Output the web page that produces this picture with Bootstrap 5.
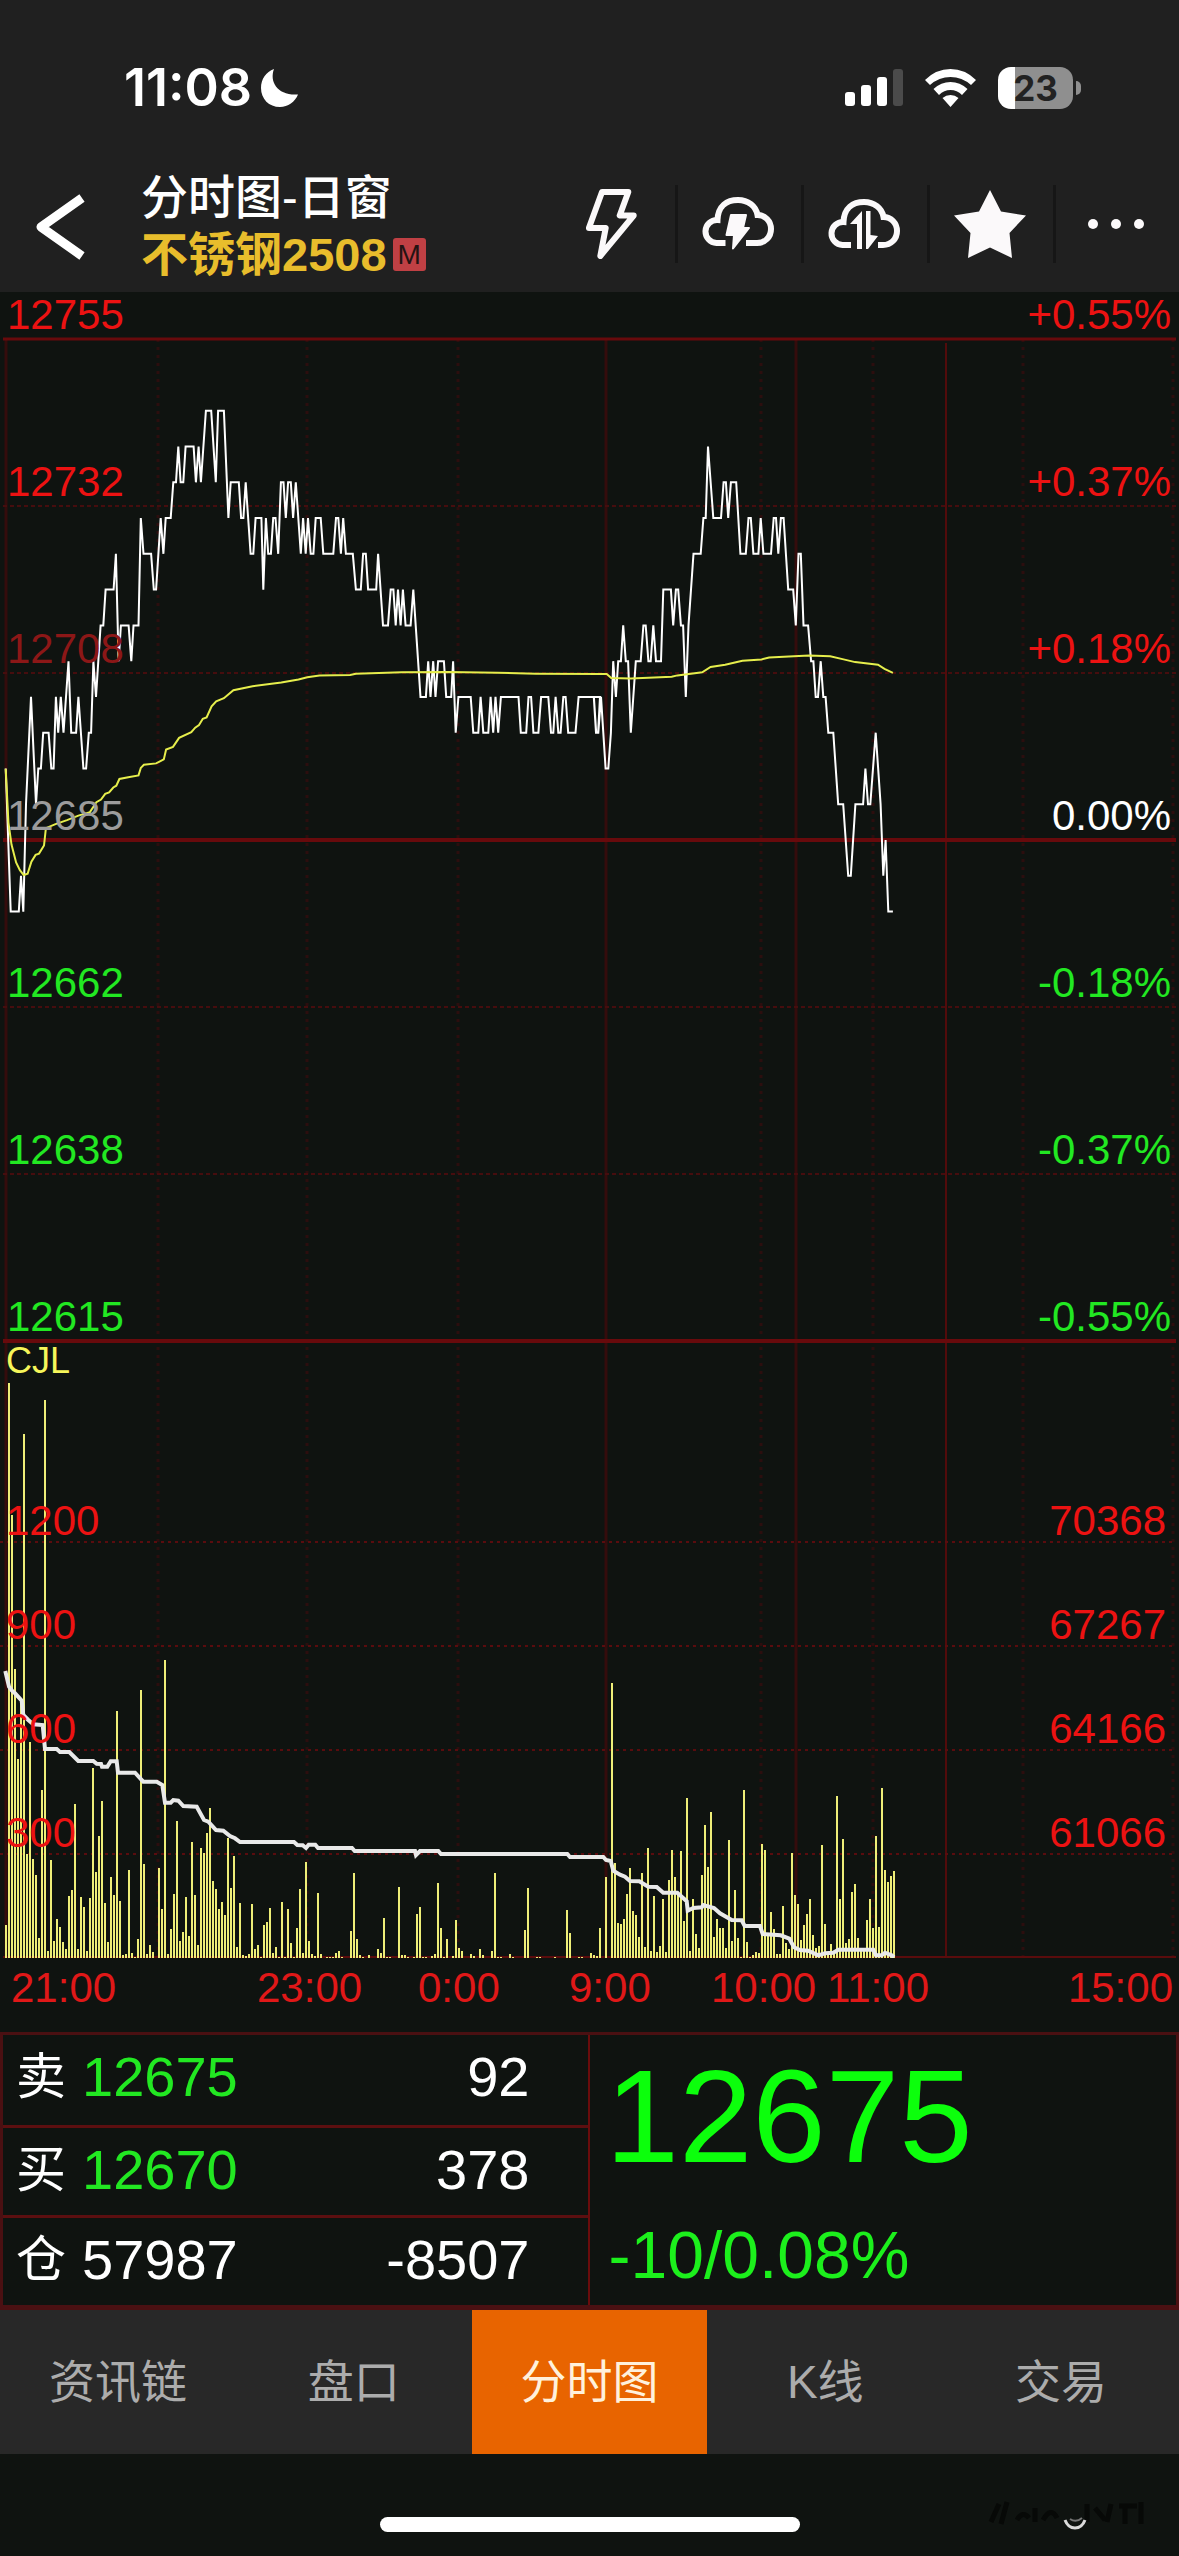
<!DOCTYPE html>
<html lang="zh-CN">
<head>
<meta charset="utf-8">
<meta name="viewport" content="width=device-width, initial-scale=1">
<title>不锈钢2508 分时图</title>
<link href="https://cdn.jsdelivr.net/npm/bootstrap@5.3.0/dist/css/bootstrap.min.css" rel="stylesheet">
<style>
  body { background: #0f1310; color: #fff; font-family: "Liberation Sans", "Noto Sans CJK SC", sans-serif; }
  .app-head { background: #202020; }
  .status-row { height: 156px; padding: 20px 98px 0 124px; font: 600 52px/56px Inter, sans-serif; }
  .status-icons { gap: 22px; }
  .batt { width: 83px; height: 42px; }
  .batt-body { width: 75px; height: 42px; border-radius: 13px; background: linear-gradient(90deg, #fff 17px, #8f8f8f 17px); color: #222; font: 700 35px/42px Inter, sans-serif; }
  .batt-tip { width: 5px; height: 14px; border-radius: 0 7px 7px 0; background: #8f8f8f; }
  .nav-row { height: 136px; }
  .btn-back { width: 141px; padding: 6px 0 0 36px; }
  .head-text { padding-top: 4px; }
  .head-title { font-size: 47px; line-height: 57px; font-weight: 500; margin: 0; }
  .head-code { font-size: 47px; line-height: 57px; font-weight: 700; color: #e8bd2c; gap: 6px; }
  .code-flag { width: 33px; height: 33px; background: #c04044; color: #241313; font-size: 28px; line-height: 33px; border-radius: 3px; font-weight: 400; }
  .tool-btn { width: 126px; height: 78px; border-left: 3px solid #161616; padding: 0 4px 0 0; }
  .tool-btn:first-child { border-left-color: transparent; }
  .tool-btn, .btn-back { background: none; border-top: 0; border-right: 0; border-bottom: 0; color: #fbf9fa; }
  .btn-back { border-left: 0; }
  .plot-svg { inset: 0; width: 100%; height: 100%; z-index: 0; }
  .axis-row { font-size: 42px; line-height: 42px; height: 167px; padding: 0 8px 3px 7px; z-index: 1; color: #ec1212; }
  .axis-first { height: 47px; }
  .vol-row { height: 104px; padding: 0 13px 0 6px; }
  .vol-first { height: 201px; }
  .vol-name { font-size: 36px; line-height: 36px; color: #f6f65a; padding-top: 2px; }
  .c-down { color: #22e822; }
  .c-dim { color: #8c1717; }
  .c-base { color: #9c9c9c; }
  .time-row { display: grid; grid-template-columns: 246fr 161fr 151fr 142fr 116fr 346fr; height: 74px; padding: 9px 6px 0 11px; font-size: 42px; line-height: 42px; color: #e01818; }
  .quote { border: 3px solid #4a1012; border-bottom-width: 5px; }
  .quote-l { width: 50%; border-right: 2px solid #6a0c0c; }
  .q-row { height: 90px; font-size: 56px; line-height: 84px; padding: 0 58px 0 13px; }
  .q-row + .q-row { border-top: 3px solid #5c0f10; }
  .q-name { font-size: 50px; width: 66px; }
  .q-big { font-size: 132px; line-height: 132px; color: #0cff0c; padding: 16px 0 0 16px; }
  .q-chg { font-size: 66px; line-height: 66px; color: #1cf01c; padding: 39px 0 0 19px; }
  .tabs { background: #282828; height: 144px; }
  .tab-link { font-size: 46px; color: #acacac; text-decoration: none; }
  .tab-link.active { background: #e86400; color: #fff1dc; }
  .foot { height: 102px; }
  .home-bar { width: 420px; height: 15px; border-radius: 8px; background: #fff; bottom: 24px; left: 50%; transform: translateX(-50%); }
  .smudge { right: 26px; bottom: 24px; }
</style>
</head>
<body>
<header class="app-head">
  <div class="status-row d-flex align-items-center justify-content-between">
    <div class="d-flex align-items-center gap-2">
      <span>11:08</span>
      <svg width="40" height="40" viewBox="0 0 40 40" fill="#fff" aria-hidden="true"><path d="M14 1C9 14 18 28 38 26.500C35 34 28 39 20 39C9 39 1 31 1 20C1 11 6 4 14 1Z"/></svg>
    </div>
    <div class="status-icons d-flex align-items-center">
      <svg width="58" height="38" viewBox="0 0 58 38" fill="#fff" aria-hidden="true"><rect x="0" y="23" width="10" height="14" rx="3"/><rect x="16" y="16" width="10" height="21" rx="3"/><rect x="32" y="8" width="10" height="29" rx="3"/><rect x="48" y="0" width="10" height="37" rx="3" fill="#4b4b4b"/></svg>
      <svg width="51" height="38" viewBox="0 0 51 38" fill="#fff" aria-hidden="true"><path d="M0 11Q11 0 25.500 0T51 11L46 16Q37 8 25.500 8T5 16ZM8.500 20Q16 13 25.500 13T42.500 20L37 26Q32 21 25.500 21T14 26ZM17.500 29Q21 26 25.500 26T33.500 29L25.500 38Z"/></svg>
      <div class="batt d-flex align-items-center justify-content-between">
        <div class="batt-body text-center">23</div><div class="batt-tip"></div>
      </div>
    </div>
  </div>
  <nav class="nav-row d-flex align-items-center justify-content-between">
    <div class="d-flex align-items-center">
      <button type="button" class="btn-back text-start" aria-label="返回"><svg width="50" height="66" viewBox="0 0 50 66" fill="none" stroke="#fff" stroke-width="9" stroke-linejoin="round" aria-hidden="true"><path d="M46 4L5 33L46 62"/></svg></button>
      <div class="head-text">
        <h1 class="head-title">分时图-日窗</h1>
        <div class="head-code d-flex align-items-center"><span>不锈钢2508</span><span class="code-flag text-center">M</span></div>
      </div>
    </div>
    <div class="d-flex">
      <button type="button" class="tool-btn d-flex align-items-center justify-content-center" aria-label="闪电下单"><svg width="52" height="70" viewBox="0 0 52 70" fill="none" stroke="currentColor" stroke-width="6" stroke-linejoin="round" aria-hidden="true"><path d="M16 3H42.300L33.700 26.500H47.700L14.300 67L19.700 39H2.900Z"/></svg></button>
      <button type="button" class="tool-btn d-flex align-items-center justify-content-center" aria-label="云条件单"><svg width="72" height="54" viewBox="0 0 72 54" aria-hidden="true"><path d="M23.500 46H14.500A11.500 11.500 0 0 1 15.500 23C16 9 25 3 36 3C46 3 54 9 55.500 18C63 18 69 24 69 32C69 40 63 46 55 46H44" fill="none" stroke="currentColor" stroke-width="6"/><path d="M29 18H44L41 31H47L31 51.500L32 38H24.500Z" fill="currentColor" stroke="currentColor" stroke-width="2" stroke-linejoin="round"/></svg></button>
      <button type="button" class="tool-btn d-flex align-items-center justify-content-center" aria-label="云止损"><svg width="72" height="50" viewBox="0 0 72 50" aria-hidden="true"><path d="M23 46H14.500A11.500 11.500 0 0 1 15.500 23C16 9 25 3 36 3C46 3 54 9 55.500 18C63 18 69 24 69 32C69 40 63 46 55 46H50" fill="none" stroke="currentColor" stroke-width="6"/><path d="M34 12V50H29V25H22ZM38 12H42.500V36L50 37L40 50H38Z" fill="currentColor"/></svg></button>
      <button type="button" class="tool-btn d-flex align-items-center justify-content-center" aria-label="自选"><svg width="72" height="68" viewBox="0 0 72 68" fill="currentColor" aria-hidden="true"><path d="M36 0L47 21.500L72 25.500L55.500 43L58 68L36 57.500L14 68L16.500 43L0 25.500L25 21.500Z"/></svg></button>
      <button type="button" class="tool-btn d-flex align-items-center justify-content-center" aria-label="更多"><svg width="56" height="10" viewBox="0 0 56 10" fill="currentColor" aria-hidden="true"><circle cx="5" cy="5" r="5"/><circle cx="28" cy="5" r="5"/><circle cx="51" cy="5" r="5"/></svg></button>
    </div>
  </nav>
</header>

<main>
  <section class="position-relative" aria-label="分时走势">
    <svg class="plot-svg position-absolute" viewBox="0 292 1179 1666" preserveAspectRatio="none" fill="none" aria-hidden="true">
      <g stroke="#350c0c" stroke-width="3"><path d="M6 339V1958M606 339V1958M796 339V1958"/><path d="M946 343V1958" stroke="#520b0b" stroke-width="2"/></g>
      <path d="M158 339V1958M307 339V1958M458 339V1958M761 339V1958M873 339V1958M1023 339V1958M1173 339V1958" stroke="#2c0e0e" stroke-width="3" stroke-dasharray="3 5"/>
      <path d="M3 506H1176M3 673H1176M3 1007H1176M3 1174H1176" stroke="#460d0e" stroke-width="2" stroke-dasharray="4 3"/>
      <path d="M0 1542H1176M0 1646H1176M0 1750H1176M0 1854H1176" stroke="#5a0c0e" stroke-width="2" stroke-dasharray="3 4"/>
      <path d="M3 339H1176" stroke="#680a0c" stroke-width="3"/>
      <path d="M3 840H1176M3 1341H1176" stroke="#680a0c" stroke-width="4"/>
      <path d="M3 1957H1176" stroke="#5a0c0c" stroke-width="2"/>
      <path id="vol" stroke="#eeee78" stroke-width="2"/>
      <path id="oi" stroke="#e9e9e9" stroke-width="4"/>
      <path id="price" stroke="#fff" stroke-width="2"/>
      <path id="avg" stroke="#e6ee4c" stroke-width="2"/>
    </svg>
    <div class="axis-row axis-first position-relative d-flex align-items-end justify-content-between"><span>12755</span><span>+0.55%</span></div>
    <div class="axis-row position-relative d-flex align-items-end justify-content-between"><span>12732</span><span>+0.37%</span></div>
    <div class="axis-row position-relative d-flex align-items-end justify-content-between"><span class="c-dim">12708</span><span>+0.18%</span></div>
    <div class="axis-row position-relative d-flex align-items-end justify-content-between"><span class="c-base">12685</span><span class="text-white">0.00%</span></div>
    <div class="axis-row c-down position-relative d-flex align-items-end justify-content-between"><span>12662</span><span>-0.18%</span></div>
    <div class="axis-row c-down position-relative d-flex align-items-end justify-content-between"><span>12638</span><span>-0.37%</span></div>
    <div class="axis-row c-down position-relative d-flex align-items-end justify-content-between"><span>12615</span><span>-0.55%</span></div>
    <div class="axis-row vol-row vol-first position-relative d-flex flex-column justify-content-between">
      <div class="vol-name">CJL</div>
      <div class="d-flex justify-content-between"><span>1200</span><span>70368</span></div>
    </div>
    <div class="axis-row vol-row position-relative d-flex align-items-end justify-content-between"><span>900</span><span>67267</span></div>
    <div class="axis-row vol-row position-relative d-flex align-items-end justify-content-between"><span>600</span><span>64166</span></div>
    <div class="axis-row vol-row position-relative d-flex align-items-end justify-content-between"><span>300</span><span>61066</span></div>
    <div class="axis-row vol-row"></div>
  </section>
  <div class="time-row align-items-center pb-4">
    <span>21:00</span><span>23:00</span><span>0:00</span><span>9:00</span><span>10:00</span><span class="d-flex justify-content-between"><span>11:00</span><span>15:00</span></span>
  </div>

  <section class="quote d-flex" aria-label="盘口报价">
    <div class="quote-l">
      <div class="q-row d-flex"><span class="q-name">卖</span><span class="c-down">12675</span><span class="ms-auto">92</span></div>
      <div class="q-row d-flex"><span class="q-name">买</span><span class="c-down">12670</span><span class="ms-auto">378</span></div>
      <div class="q-row d-flex"><span class="q-name">仓</span><span>57987</span><span class="ms-auto">-8507</span></div>
    </div>
    <div>
      <div class="q-big">12675</div>
      <div class="q-chg">-10/0.08%</div>
    </div>
  </section>
</main>

<footer>
  <nav class="tabs d-flex" aria-label="页面切换">
    <a href="#" class="tab-link flex-fill w-25 d-flex align-items-center justify-content-center">资讯链</a>
    <a href="#" class="tab-link flex-fill w-25 d-flex align-items-center justify-content-center">盘口</a>
    <a href="#" class="tab-link active flex-fill w-25 d-flex align-items-center justify-content-center" aria-current="page">分时图</a>
    <a href="#" class="tab-link flex-fill w-25 d-flex align-items-center justify-content-center">K线</a>
    <a href="#" class="tab-link flex-fill w-25 d-flex align-items-center justify-content-center">交易</a>
  </nav>
  <div class="foot position-relative">
    <div class="home-bar position-absolute"></div>
    <svg class="smudge position-absolute" width="166" height="36" viewBox="0 0 166 36" fill="none" aria-hidden="true">
      <path d="M12 8L4 26M20 6L14 28M30 24Q36 14 42 22M48 12V26M56 24Q64 10 70 22M100 8V26M108 12L118 24M124 8L120 26M132 10H150M138 8V28M154 6V28" stroke="#070907" stroke-width="5"/>
      <path d="M78 24Q81 32 88 32T98 24" stroke="#dadada" stroke-width="3"/><path d="M83 23Q89 27 95 22" stroke="#777" stroke-width="2"/>
    </svg>
  </div>
</footer>

<script src="https://cdn.jsdelivr.net/npm/bootstrap@5.3.0/dist/js/bootstrap.bundle.min.js"></script>
<script>
  // Draws a line through "x,y" samples after mapping both axes to plot coordinates.
  const pts = (text, fx, fy) => text.trim().split(/\s+/).map(p => { const [x, y] = p.split(',').map(Number); return fx(x).toFixed(1) + ' ' + fy(y).toFixed(1); });
  const night = x => x / 2.6133, day = x => 580 + x / 2.6177;
  const tick = t => 410.7 + t * 35.78, avgY = y => 300 + y / 2.24;
  const set = (id, list) => document.getElementById(id).setAttribute('d', 'M' + list.join('L'));

  // Last price: y is the number of ticks below the day's high
  const nightPrice = `15,10 28,14 49,14 55,13 61,14 68,11 81,8 94,11 100,10 107,10 113,9 127,9 134,10 140,10 146,8 152,9 159,8 166,9 179,7 186,9 199,9 205,8 218,10 225,10 232,9 238,9 244,7 251,8 263,6 270,6 276,5 297,5 303,4 310,7 316,6 336,6 343,7 349,6 362,6 368,3 375,4 395,4 402,5 408,5 420,3 427,4 433,3 446,3 453,2 460,2 466,1 472,2 479,2 485,1 506,1 512,2 519,1 525,2 538,0 552,0 564,2 570,0 585,0 597,3 603,2 624,2 630,3 636,3 642,2 655,4 662,4 668,3 683,3 688,5 695,3 701,4 708,4 714,3 720,3 727,4 734,2 741,2 747,3 753,2 760,2 766,3 773,2 786,4 792,3 799,4 805,3 812,4 819,4 825,3 838,3 845,4 871,4 878,3 884,3 891,4 897,3 904,4 922,4 930,5 943,5 949,4 956,4 962,5 983,5 988,4 1001,6 1014,6 1021,5 1028,5 1034,6 1040,5 1047,6 1053,5 1060,6 1073,6 1080,5 1099,8 1113,8 1119,7 1125,8 1132,7 1138,8 1145,7 1160,7 1166,8 1179,8 1184,7 1191,9 1198,8 1230,8 1237,9 1250,9 1256,8 1263,9 1276,9 1282,8 1289,9 1295,8 1302,9 1309,8 1355,8 1361,9 1375,9 1381,8 1388,8 1394,9 1407,9 1414,8 1433,8 1440,9 1446,9 1452,8 1459,9 1465,9 1472,8 1478,8 1485,9 1504,9 1512,8 1552,8 1558,9 1563,9 1568,8`;
  const dayPrice = `36,8 42,9 48,9 55,8 67,10 74,10 81,9 87,7 94,8 100,7 107,7 113,6 120,7 126,7 133,9 146,7 159,7 166,6 172,6 179,7 185,7 192,6 199,7 212,7 218,5 238,5 244,6 251,5 257,5 264,6 270,6 277,8 284,6 297,4 316,4 323,3 329,3 335,1 349,3 369,3 376,2 382,2 388,3 395,2 409,2 420,4 434,4 441,3 447,3 454,4 467,4 473,3 480,4 500,4 507,3 513,3 519,4 526,3 533,3 545,5 558,5 565,6 572,4 578,4 585,6 597,6 605,7 611,7 617,8 623,8 630,7 637,8 643,8 650,9 663,9 676,11 689,11 702,13 709,13 721,11 741,11 747,10 754,11 760,11 774,9 787,11 794,13 800,12 807,14 819,14`;
  set('price', [...pts(nightPrice, night, tick), ...pts(dayPrice, day, tick)]);

  // Average price
  const nightAvg = `15,1050 22,1170 30,1220 42,1260 52,1277 62,1288 72,1285 82,1258 93,1243 102,1240 115,1222 120,1183 145,1174 175,1165 205,1155 235,1147 252,1125 264,1119 275,1106 285,1103 296,1092 304,1088 312,1073 335,1069 362,1065 368,1048 376,1041 408,1038 428,1029 434,1007 452,1001 468,981 500,968 510,958 520,952 530,938 540,935 553,910 565,899 585,892 610,874 660,865 735,857 780,850 803,845 835,841 915,840 930,837 1050,834 1170,833 1300,835 1400,837 1568,838`;
  const dayAvg = `70,838 82,847 133,848 240,844 255,841 320,834 342,822 380,817 425,808 475,805 495,801 560,798 600,796 655,798 690,805 720,811 780,817 797,826 819,835`;
  set('avg', [...pts(nightAvg, night, avgY), ...pts(dayAvg, day, avgY)]);

  // Traded volume, one bar per step
  const vol = [33,575,443,289,199,254,524,104,216,99,83,20,168,558,7,98,17,39,31,16,9,62,68,154,9,61,51,7,60,190,86,122,157,55,16,81,63,247,57,3,4,88,5,1,19,268,94,4,13,6,0,90,49,298,4,29,64,137,17,26,61,22,116,63,13,110,105,125,150,77,69,49,56,43,120,70,102,11,55,3,2,4,54,9,13,1,33,36,50,5,11,1,56,1,49,15,1,30,69,5,
    96,17,4,2,65,4,0,1,1,1,5,7,1,0,0,27,85,19,3,1,0,3,0,0,9,5,40,1,1,0,0,71,3,3,1,0,1,44,51,1,1,0,2,4,75,30,1,19,0,2,38,10,7,0,0,4,2,0,9,3,0,0,7,85,1,1,0,0,4,1,0,0,0,28,70,0,0,1,1,0,0,0,0,1,0,0,0,48,25,0,0,1,1,0,0,5,3,2,30,0,
    81,0,275,95,35,34,39,64,90,47,43,21,85,11,110,7,62,6,12,59,6,78,108,81,64,107,37,160,7,59,24,10,83,133,91,146,21,39,30,30,10,118,17,68,20,1,168,16,1,3,6,5,114,108,22,46,29,4,4,52,15,9,105,63,54,18,33,44,59,23,10,12,113,34,4,14,6,162,59,119,15,19,66,74,20,9,9,38,59,30,122,31,170,88,76,82,87];
  document.getElementById('vol').setAttribute('d', vol.map((v, i) => v ? `M${6 + 3 * i} 1958v-${v}` : '').join(''));

  // Open interest
  const oiA = `16,213 27,260 36,272 45,280 65,302 70,345 85,360 100,373 128,375 135,447 170,447 180,456 208,456 235,483 280,483 290,491 303,492 306,500 322,500 332,484 350,484 354,518 405,518 430,545 470,545 487,555 495,608 512,608 520,600 535,602 550,618 590,620 612,660 625,665 648,690 670,692 690,708 705,715 720,726 882,726 892,735`;
  const oiB = `98,76 108,84 116,74 136,74 144,84 246,84 254,93 435,93 438,105 450,93 505,93 513,102 892,102 900,111 1000,111`;
  const oiC = `108,540 122,543 130,572 150,584 165,590 180,603 208,604 235,620 260,621 280,638 322,638 350,664 353,692 370,684 395,682 400,675 432,684 450,700 485,720 515,721 524,738 570,738 578,762 632,766 658,776 672,802 690,810 715,812 745,826 765,820 790,818 805,809 910,809 918,826 935,826 945,818 965,826 972,832`;
  set('oi', [...pts(oiA, x => x / 3, y => 1600 + y / 3), ...pts(oiB, x => 270 + x / 3, y => 1820 + y / 3), ...pts(oiC, x => 570 + x / 3, y => 1680 + y / 3)]);
</script>
</body>
</html>
